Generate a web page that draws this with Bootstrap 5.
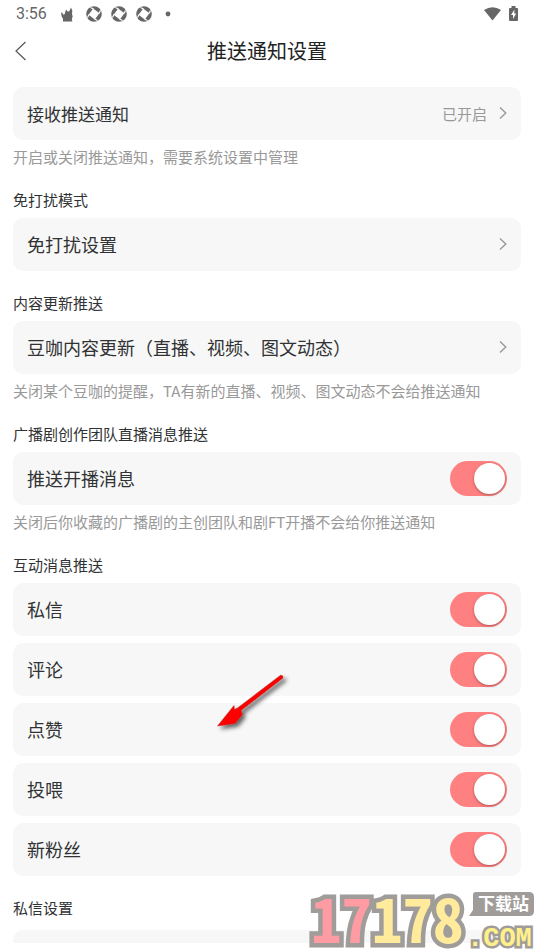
<!DOCTYPE html>
<html lang="zh-CN">
<head>
<meta charset="utf-8">
<meta name="viewport" content="width=device-width, initial-scale=1">
<title>推送通知设置</title>
<link href="https://cdn.jsdelivr.net/npm/bootstrap@5.3.0/dist/css/bootstrap.min.css" rel="stylesheet">
<style>
body{font-family:"Noto Sans CJK SC",sans-serif;color:#303233;background:#fff}
.status{height:28px;padding:0 16px;color:#666;font:16px/28px Roboto,sans-serif}
.status svg,.titlebar svg,.setting svg{display:block;flex:none}
.apps{margin-left:14px;gap:9px}
.titlebar{height:46px;display:grid;grid-template-columns:48px 1fr 48px;align-items:center}
.titlebar h1{font-size:20px;line-height:30px;font-weight:400;color:#222}
.back{width:48px;height:46px;padding-left:14px}
.content{padding:13px 13px 0}
.setting{min-height:53px;padding:0 14px 1px;background:#f7f7f7;border-radius:10px;color:#303233;font-size:18px;line-height:27px;text-decoration:none}
.stack{gap:7px}
.first{font-size:17px}
.state,.note{font-size:15px;color:#999}
.note{line-height:22px;margin:6px 0 0}
.group-title{font-size:15px;line-height:22px;font-weight:400;margin:21px 0 7px;color:#303233}
.stack + .group-title{margin-bottom:11px}
.chev{margin-left:12px}
.form-switch .form-check-input.toggle{width:57px;height:35px;margin:0;border:0;border-radius:18px;background:#ff8080;padding:2px;display:flex;justify-content:flex-end;box-shadow:none}
.toggle::before{content:"";width:31px;height:31px;border-radius:50%;background:#fff;box-shadow:0 1px 3px #0005}
.toggle:not(:checked){justify-content:flex-start!important;background:#ccc!important}
.gesture{height:7px}
.pointer{position:absolute;left:212px;top:670px}
.watermark{position:absolute;right:0;bottom:0}
</style>
<script src="https://cdn.jsdelivr.net/npm/bootstrap@5.3.0/dist/js/bootstrap.bundle.min.js" defer></script>
</head>
<body class="vh-100 d-flex flex-column overflow-hidden position-relative">
<svg class="d-none" aria-hidden="true">
<symbol id="chevron" viewBox="0 0 8 14"><path d="M1 1.5 6.8 7 1 12.5" fill="none" stroke="#999" stroke-width="1.4"/></symbol>
<symbol id="shutter" viewBox="0 0 16 16"><circle cx="8" cy="8" r="7.8" fill="#666"/><path d="M7.200 2.600 13.400 7.200 8.800 13.400 2.600 8.800Z" fill="#fff"/><path d="M7.500 3 4.500 1.500M13 7.500l1.500-3M8.500 13l3 1.500M3 8.500l-1.500 3" stroke="#fff" stroke-width="1.2"/></symbol>
</svg>
<div class="status d-flex align-items-center flex-shrink-0">
<span>3:56</span>
<div class="apps d-flex align-items-center">
<svg width="12" height="16" viewBox="0 0 12 16"><path d="M2 15.500v-2.800L.7 10.500 0 6.500l1.500.6.9 1.600 1.200-.5L5 3.500l1.700 2 1.600-.2L10 1.500l1.300 3.300-.3 3.400.7 2-.9 3 .6 2.300Z" fill="#666"/></svg>
<svg class="ms-1" width="16" height="16"><use href="#shutter"/></svg>
<svg width="16" height="16"><use href="#shutter"/></svg>
<svg width="16" height="16"><use href="#shutter"/></svg>
<svg class="ms-1" width="6" height="6" viewBox="0 0 6 6"><circle cx="3" cy="3" r="2.4" fill="#666"/></svg>
</div>
<svg class="ms-auto" width="17" height="14" viewBox="0 0 17 14"><path d="M0 3Q8.500-2.600 17 3L8.500 13.500Z" fill="#666"/></svg>
<svg class="ms-2" width="9" height="16" viewBox="0 0 9 16"><path d="M2.500 0h4v2H8q1 0 1 1v11q0 1-1 1H1q-1 0-1-1V3q0-1 1-1h1.500Z" fill="#666"/><path d="M5.500 3.500 2 9h2v4l3.200-5.500h-2Z" fill="#fff"/></svg>
</div>
<header class="titlebar flex-shrink-0">
<button class="btn back border-0 py-0 pe-0" type="button" aria-label="返回"><svg width="13" height="20" viewBox="0 0 13 20"><path d="M11.500 1 2 10l9.500 9" fill="none" stroke="#555" stroke-width="1.2"/></svg></button>
<h1 class="m-0 text-center">推送通知设置</h1>
</header>
<main class="content flex-grow-1 overflow-hidden">
<a href="#" class="setting first d-flex align-items-center"><span class="me-auto">接收推送通知</span><span class="state">已开启</span><svg class="chev" width="8" height="14"><use href="#chevron"/></svg></a>
<p class="note">开启或关闭推送通知，需要系统设置中管理</p>
<h2 class="group-title">免打扰模式</h2>
<a href="#" class="setting d-flex align-items-center justify-content-between">免打扰设置<svg width="8" height="14"><use href="#chevron"/></svg></a>
<h2 class="group-title">内容更新推送</h2>
<a href="#" class="setting d-flex align-items-center justify-content-between">豆咖内容更新（直播、视频、图文动态）<svg width="8" height="14"><use href="#chevron"/></svg></a>
<p class="note">关闭某个豆咖的提醒，TA有新的直播、视频、图文动态不会给推送通知</p>
<h2 class="group-title">广播剧创作团队直播消息推送</h2>
<div class="setting form-switch d-flex align-items-center justify-content-between"><label for="live">推送开播消息</label><input class="form-check-input toggle" type="checkbox" role="switch" id="live" checked></div>
<p class="note">关闭后你收藏的广播剧的主创团队和剧FT开播不会给你推送通知</p>
<h2 class="group-title">互动消息推送</h2>
<div class="stack d-flex flex-column">
<div class="setting form-switch d-flex align-items-center justify-content-between"><label for="dm">私信</label><input class="form-check-input toggle" type="checkbox" role="switch" id="dm" checked></div>
<div class="setting form-switch d-flex align-items-center justify-content-between"><label for="comment">评论</label><input class="form-check-input toggle" type="checkbox" role="switch" id="comment" checked></div>
<div class="setting form-switch d-flex align-items-center justify-content-between"><label for="like">点赞</label><input class="form-check-input toggle" type="checkbox" role="switch" id="like" checked></div>
<div class="setting form-switch d-flex align-items-center justify-content-between"><label for="feed">投喂</label><input class="form-check-input toggle" type="checkbox" role="switch" id="feed" checked></div>
<div class="setting form-switch d-flex align-items-center justify-content-between"><label for="fans">新粉丝</label><input class="form-check-input toggle" type="checkbox" role="switch" id="fans" checked></div>
</div>
<h2 class="group-title">私信设置</h2>
<div class="setting"></div>
</main>
<div class="gesture flex-shrink-0"></div>
<svg class="pointer" width="80" height="66" viewBox="0 0 80 66" aria-hidden="true"><defs><filter id="soft" x="-20%" y="-20%" width="150%" height="150%"><feDropShadow dx="3" dy="3" stdDeviation="2" flood-opacity=".6"/></filter></defs><path d="M68.500 5.300Q71.500 5 71 8L29 40.500l1.500 4-7.500 9-17.500 2.500L22 35.500l.5 4 3-1.500Z" fill="#f00" stroke="#a33" stroke-width=".5" filter="url(#soft)"/></svg>
<svg class="watermark" width="226" height="63" viewBox="0 0 226 63" role="img" aria-label="17178下载站.COM">
<g stroke="#9f9c99" paint-order="stroke" font-weight="700">
<text x="3" y="56" font-family="Noto Sans Mono CJK SC, Liberation Sans, sans-serif" font-size="61" stroke-width="9" fill="#ffeb9b"><tspan fill="#ff9ca3">17</tspan>178</text>
<text x="159" y="59" font-family="Liberation Mono, monospace" font-size="27" stroke-width="5" fill="#fff08c">.COM</text>
</g>
<path d="M168 5h53q5 0 5 5v14q0 5-5 5h-60l4-6V8q0-3 3-3Z" fill="#9f9c99"/>
<text x="170" y="23" font-family="Noto Sans CJK SC, sans-serif" font-size="17" font-weight="700" fill="#fff">下载站</text>
</svg>
</body>
</html>
